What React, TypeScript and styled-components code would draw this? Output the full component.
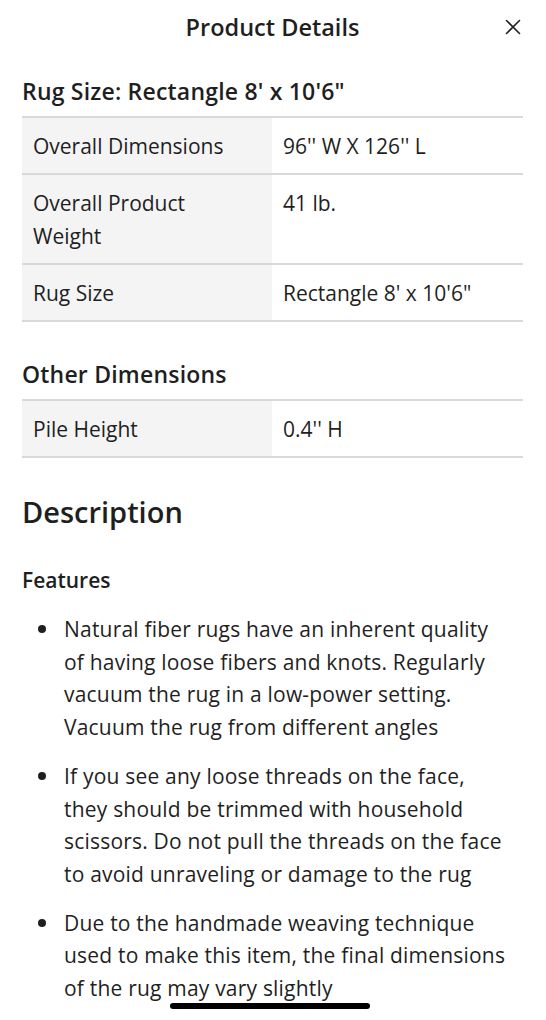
import React from "react";
import styled, { createGlobalStyle } from "styled-components";

const Global = createGlobalStyle`
  html, body { margin: 0; padding: 0; background: #fff; }
  body { font-family: "Open Sans", "Noto Sans", sans-serif; color: #1f1f1f; }
`;

const Page = styled.div`
  position: relative;
  width: 546px;
  height: 1020px;
  overflow: hidden;
  background: #fff;
  padding: 0 23px 0 22px;
  box-sizing: border-box;
`;

const Header = styled.header`
  display: grid;
  grid-template-columns: 1fr auto 1fr;
  align-items: center;
  height: 54px;
`;

const Title = styled.h1`
  grid-column: 2;
  margin: -1px 0 0;
  font-size: 23.5px;
  font-weight: 600;
`;

const Close = styled.button`
  grid-column: 3;
  justify-self: end;
  margin: -1px 1px 0 0;
  background: none;
  border: 0;
  padding: 0;
  width: 18px;
  height: 18px;
  display: flex;
  color: #222;
`;

const SectionTitle = styled.h2<{ $top: number }>`
  margin: 0;
  font-size: 23px;
  font-weight: 600;
  letter-spacing: 0.2px;
  line-height: 28px;
  padding: ${(p) => p.$top}px 0 11px;
`;

const Table = styled.div`
  border-top: 2px solid #d9d9d9;
`;

const Row = styled.div`
  display: grid;
  grid-template-columns: 250px 1fr;
  border-bottom: 2px solid #d9d9d9;
`;

const Cell = styled.div`
  padding: 12px 12px 10px 11px;
  font-size: 21px;
  line-height: 33px;
  white-space: nowrap;
`;

const Label = styled(Cell)`
  background: #f4f4f4;
`;

const Heading = styled.h2`
  margin: 0;
  padding: 34px 0 0;
  font-size: 29px;
  font-weight: 600;
  line-height: 40px;
`;

const SubHeading = styled.h3`
  margin: 0;
  padding: 34px 0 0;
  font-size: 21px;
  font-weight: 600;
  line-height: 28px;
`;

const List = styled.ul`
  margin: 19px 0 0;
  padding: 0 0 0 42px;
  list-style: none;
`;

const Item = styled.li`
  position: relative;
  font-size: 21px;
  letter-spacing: 0.2px;
  line-height: 32.7px;
  margin-bottom: 16px;
  white-space: nowrap;
  &::before {
    content: "";
    position: absolute;
    left: -26px;
    top: 12px;
    width: 8px;
    height: 8px;
    border-radius: 50%;
    background: #1f1f1f;
  }
`;

const HomeIndicator = styled.div`
  position: absolute;
  left: 170px;
  bottom: 11px;
  width: 200px;
  height: 6px;
  border-radius: 3px;
  background: #000;
`;

const sizeRows: [string[], string][] = [
  [["Overall Dimensions"], "96'' W X 126'' L"],
  [["Overall Product", "Weight"], "41 lb."],
  [["Rug Size"], "Rectangle 8' x 10'6\""],
];

const features: string[][] = [
  [
    "Natural fiber rugs have an inherent quality",
    "of having loose fibers and knots. Regularly",
    "vacuum the rug in a low-power setting.",
    "Vacuum the rug from different angles",
  ],
  [
    "If you see any loose threads on the face,",
    "they should be trimmed with household",
    "scissors. Do not pull the threads on the face",
    "to avoid unraveling or damage to the rug",
  ],
  [
    "Due to the handmade weaving technique",
    "used to make this item, the final dimensions",
    "of the rug may vary slightly",
  ],
];

const Lines = ({ lines }: { lines: string[] }) => (
  <>
    {lines.map((l, i) => (
      <React.Fragment key={i}>
        {i > 0 && <br />}
        {l}
      </React.Fragment>
    ))}
  </>
);

export default function App() {
  return (
    <Page>
      <Global />
      <Header>
        <Title>Product Details</Title>
        <Close aria-label="Close">
          <svg width="18" height="18" viewBox="0 0 18 18" fill="none" stroke="currentColor" strokeWidth="1.6" strokeLinecap="round">
            <path d="M2.5 2.5 L15.5 15.5 M15.5 2.5 L2.5 15.5" />
          </svg>
        </Close>
      </Header>
      <SectionTitle $top={23}>Rug Size: Rectangle 8' x 10'6"</SectionTitle>
      <Table>
        {sizeRows.map(([k, v]) => (
          <Row key={k.join(" ")}>
            <Label><Lines lines={k} /></Label>
            <Cell>{v}</Cell>
          </Row>
        ))}
      </Table>
      <SectionTitle $top={38}>Other Dimensions</SectionTitle>
      <Table>
        <Row>
          <Label>Pile Height</Label>
          <Cell>0.4'' H</Cell>
        </Row>
      </Table>
      <Heading>Description</Heading>
      <SubHeading>Features</SubHeading>
      <List>
        {features.map((f) => (
          <Item key={f[0]}><Lines lines={f} /></Item>
        ))}
      </List>
      <HomeIndicator />
    </Page>
  );
}
